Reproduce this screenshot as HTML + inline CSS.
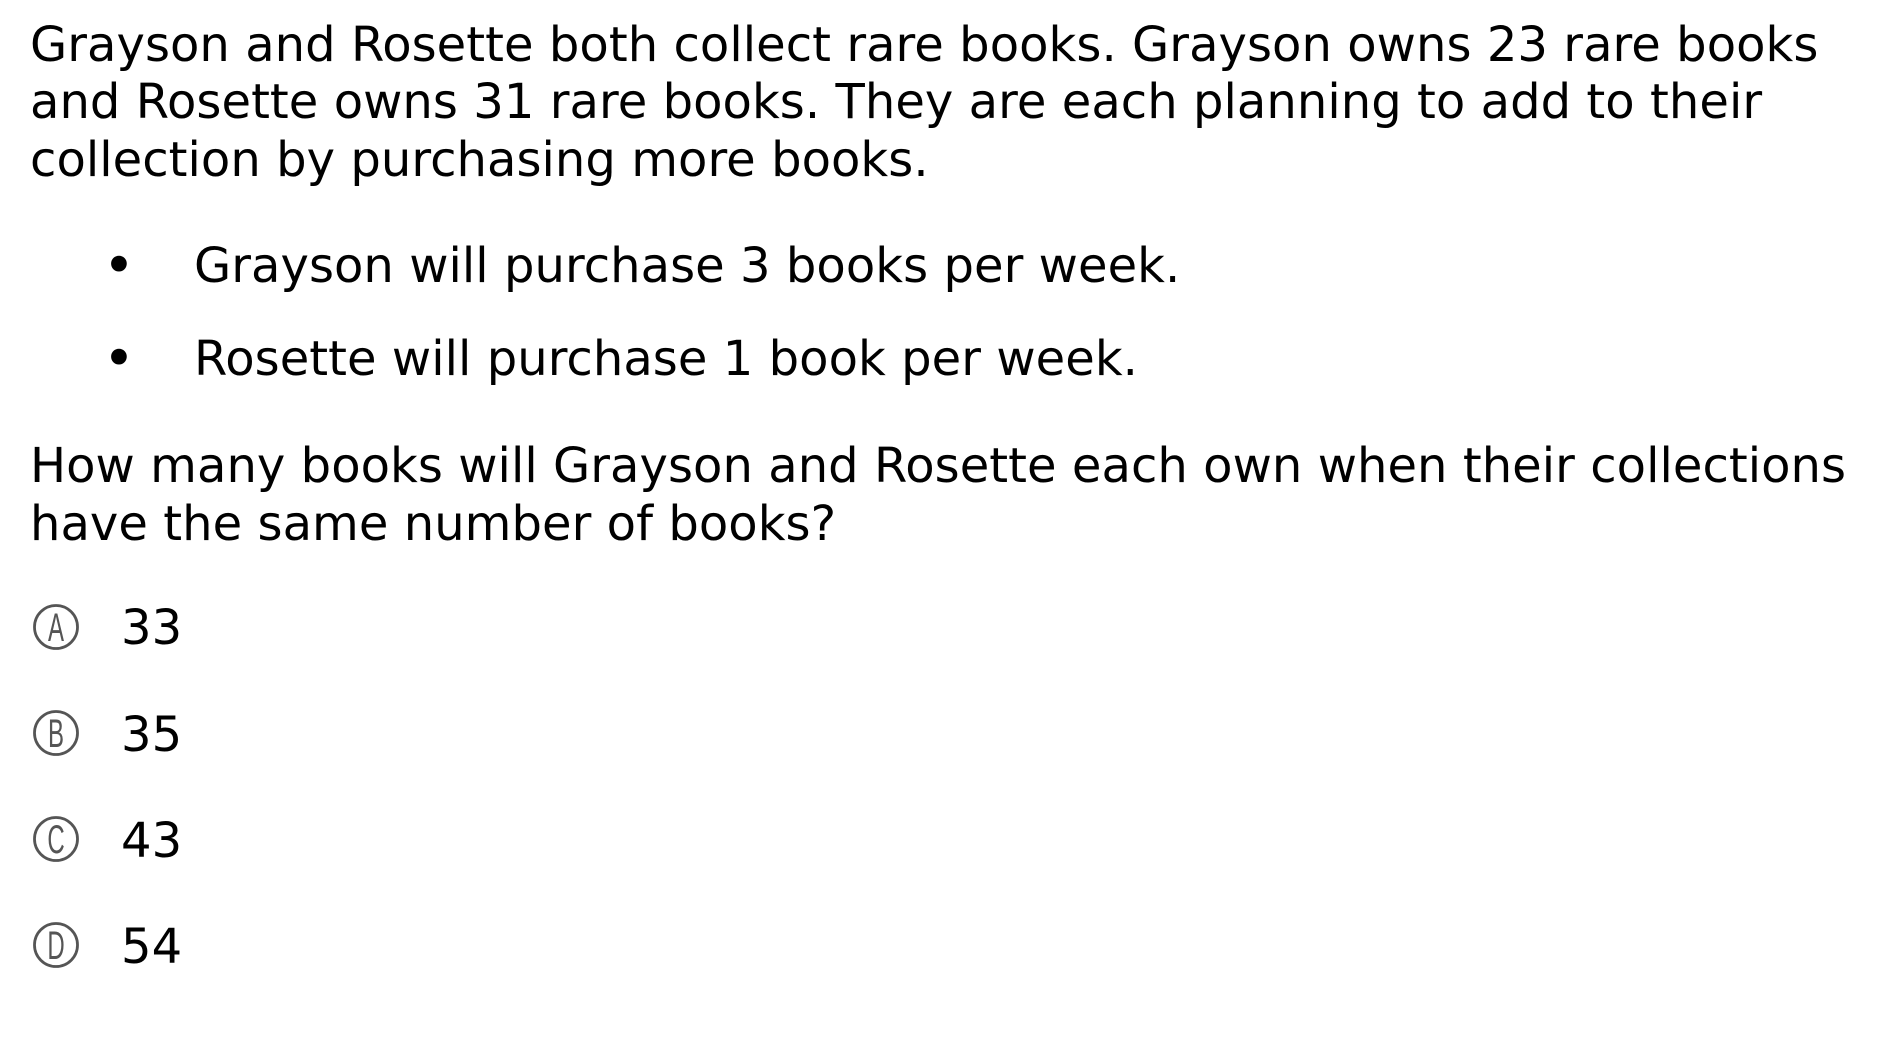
<!DOCTYPE html>
<html><head><meta charset="utf-8"><style>
html,body{margin:0;padding:0;background:#fff;width:1886px;height:1040px;overflow:hidden}
.t{position:absolute;font-family:"DejaVu Sans","Liberation Sans",sans-serif;font-size:48px;line-height:58px;color:#000;white-space:nowrap;letter-spacing:0.05px}
svg{position:absolute;left:0;top:0}
</style></head><body>
<div class="t" style="left:30px;top:16px">Grayson and Rosette both collect rare books. Grayson owns 23 rare books</div>
<div class="t" style="left:30px;top:73px">and Rosette owns 31 rare books. They are each planning to add to their</div>
<div class="t" style="left:30px;top:131px">collection by purchasing more books.</div>
<div class="t" style="left:103px;top:237px;font-size:54px">•</div>
<div class="t" style="left:194px;top:237px">Grayson will purchase 3 books per week.</div>
<div class="t" style="left:103px;top:330px;font-size:54px">•</div>
<div class="t" style="left:194px;top:330px">Rosette will purchase 1 book per week.</div>
<div class="t" style="left:30px;top:437px">How many books will Grayson and Rosette each own when their collections</div>
<div class="t" style="left:30px;top:495px">have the same number of books?</div>
<div class="t" style="left:121px;top:599px">33</div>
<div class="t" style="left:121px;top:706px">35</div>
<div class="t" style="left:121px;top:812px">43</div>
<div class="t" style="left:121px;top:918px">54</div>
<svg width="1886" height="1040">
<g fill="none" stroke="#555" stroke-width="2.8">
<circle cx="56" cy="627" r="21.5"/>
<circle cx="56" cy="733" r="21.5"/>
<circle cx="56" cy="839" r="21.5"/>
<circle cx="56" cy="945" r="21.5"/>
</g>
<g fill="#555" font-family="Liberation Sans, sans-serif" font-size="40" text-anchor="middle">
<text x="56" y="641" transform="translate(56 0) scale(0.6 1) translate(-56 0)">A</text>
<text x="56" y="747" transform="translate(56 0) scale(0.6 1) translate(-56 0)">B</text>
<text x="56" y="853" transform="translate(56 0) scale(0.6 1) translate(-56 0)">C</text>
<text x="56" y="959" transform="translate(56 0) scale(0.6 1) translate(-56 0)">D</text>
</g>
</svg>
</body></html>
